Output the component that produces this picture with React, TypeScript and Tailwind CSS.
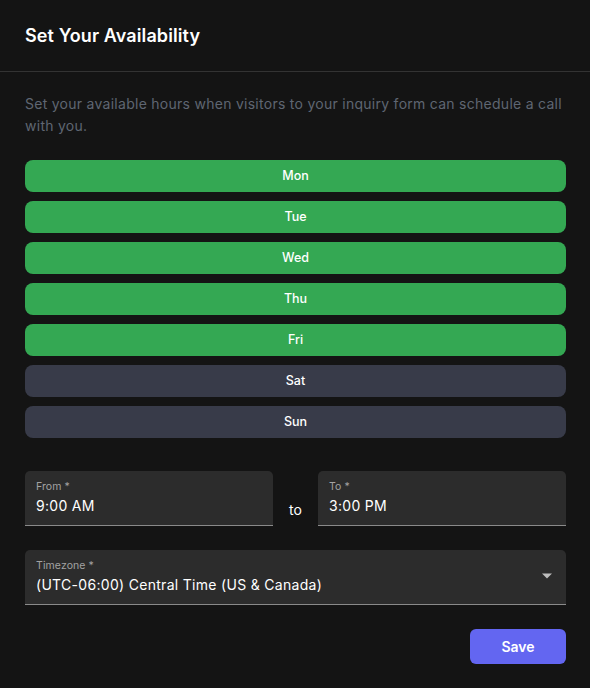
import React, { useState } from 'react';

const DAYS = ['Mon', 'Tue', 'Wed', 'Thu', 'Fri', 'Sat', 'Sun'];

const Field: React.FC<{ label: string; value: string; className?: string; select?: boolean }> = ({ label, value, className = '', select }) => (
  <div className={`relative bg-[#2c2c2c] rounded-t-[5px] border-b border-[#8a8a8a] h-[55px] px-[11px] pt-[9px] ${className}`}>
    <div className="text-[10.5px] leading-[14px] text-[#a3a3a3] tracking-[0.1px]">{label}</div>
    <div className="text-[14px] leading-[20px] text-white mt-[2px] tracking-[0.3px]">{value}</div>
    {select && (
      <svg className="absolute right-[13px] top-[22px]" width="12" height="8" viewBox="0 0 12 8">
        <path d="M1 1.5 L6 6.5 L11 1.5 Z" fill="#bdbdbd" />
      </svg>
    )}
  </div>
);

export default function App() {
  const [active, setActive] = useState<string[]>(['Mon', 'Tue', 'Wed', 'Thu', 'Fri']);

  const toggle = (d: string) =>
    setActive(a => (a.includes(d) ? a.filter(x => x !== d) : [...a, d]));

  return (
    <div className="w-[590px] h-[688px] bg-[#141414] text-white" style={{ fontFamily: 'Inter, "Noto Sans", sans-serif' }}>
      <header className="h-[72px] border-b border-[#333333] px-[25px] flex items-center">
        <h1 className="text-[18px] font-semibold tracking-[0.1px]">Set Your Availability</h1>
      </header>

      <div className="pl-[25px] pr-[24px] pt-[21px]">
        <p className="text-[14px] leading-[22px] text-[#5f6672] tracking-[0.27px]">
          Set your available hours when visitors to your inquiry form can schedule a call with you.
        </p>

        <div className="mt-[23px] flex flex-col gap-[9px]">
          {DAYS.map(d => (
            <button
              key={d}
              onClick={() => toggle(d)}
              className={`h-[32px] rounded-[8px] text-[12.5px] font-medium ${active.includes(d) ? 'bg-[#34a853]' : 'bg-[#383b49]'}`}
            >
              {d}
            </button>
          ))}
        </div>

        <div className="mt-[33px] flex items-end">
          <Field label="From *" value="9:00 AM" className="w-[248px]" />
          <div className="w-[45px] text-center text-[14px] pb-[6px]">to</div>
          <Field label="To *" value="3:00 PM" className="flex-1" />
        </div>

        <Field label="Timezone *" value="(UTC-06:00) Central Time (US & Canada)" className="mt-[24px]" select />

        <div className="mt-[24px] flex justify-end">
          <button className="w-[96px] h-[35px] rounded-[6px] bg-[#6366f1] text-[14px] font-semibold">Save</button>
        </div>
      </div>
    </div>
  );
}
